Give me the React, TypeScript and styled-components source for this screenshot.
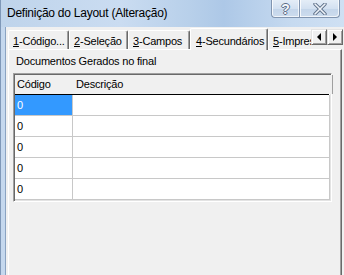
import styled, { createGlobalStyle } from 'styled-components'

const GlobalStyle = createGlobalStyle`
  html, body {
    margin: 0;
    padding: 0;
    background: #f0f0f0;
  }
  body {
    font-family: 'Liberation Sans', Arial, sans-serif;
  }
`

interface Tab {
    key: string
    label: string
    width: number
    active?: boolean
}

const tabs: Tab[] = [
    { key: '1', label: '-Código...', width: 61 },
    { key: '2', label: '-Seleção', width: 59 },
    { key: '3', label: '-Campos', width: 62 },
    { key: '4', label: '-Secundários', width: 78, active: true },
    { key: '5', label: '-Impressão', width: 60 },
]

const rows = ['0', '0', '0', '0', '0']

const App = () => {
    return (
        <>
            <GlobalStyle />
            <Window>
                <TitleBar>
                    <Title>Definição do Layout (Alteração)</Title>
                    <CaptionButtons>
                        <HelpButton>?</HelpButton>
                        <CloseButton>
                            <svg width="14" height="12" viewBox="0 0 14 12">
                                <path d="M2 1 L12 11 M12 1 L2 11" stroke="#5d6f88" strokeWidth="3.4" strokeLinecap="round" />
                                <path d="M2 1 L12 11 M12 1 L2 11" stroke="#eef3f9" strokeWidth="1.6" strokeLinecap="round" />
                            </svg>
                        </CloseButton>
                    </CaptionButtons>
                </TitleBar>
                <Body>
                    <Frame />
                    <Client>
                        <TabStrip>
                            <TabList>
                                {tabs.map((t) => (
                                    <TabItem key={t.key} $width={t.width} $active={!!t.active}>
                                        <Accel>{t.key}</Accel>
                                        {t.label}
                                    </TabItem>
                                ))}
                            </TabList>
                            <ScrollButton>
                                <Arrow $dir="left" />
                            </ScrollButton>
                            <ScrollButton>
                                <Arrow $dir="right" />
                            </ScrollButton>
                        </TabStrip>
                        <Panel>
                            <Caption>Documentos Gerados no final</Caption>
                            <Grid>
                                <HeaderRow>
                                    <HeaderCell $width={57}>Código</HeaderCell>
                                    <HeaderCell $width={256} $pad={3}>
                                        Descrição
                                    </HeaderCell>
                                </HeaderRow>
                                {rows.map((value, i) => (
                                    <Row key={i}>
                                        <Cell $width={57} $selected={i === 0}>
                                            {value}
                                        </Cell>
                                        <Cell $width={256} />
                                    </Row>
                                ))}
                            </Grid>
                        </Panel>
                    </Client>
                </Body>
            </Window>
        </>
    )
}

export default App

const Window = styled.div`
    height: 275px;
    width: 344px;
    overflow: hidden;
    display: flex;
    flex-direction: column;
    background: #c2d5eb;
`

const TitleBar = styled.div`
    height: 27px;
    flex-shrink: 0;
    display: flex;
    align-items: flex-start;
    justify-content: space-between;
    background: linear-gradient(90deg, #bfd4eb 0%, #cadcf1 35%, #b8d0ea 55%, #adc8e7 65%, #c6daf0 85%, #cfe0f3 100%);
    box-shadow: inset 1px 0 #7f98b8;
`

const Title = styled.div`
    padding: 6px 0 0 7px;
    font-size: 12px;
    letter-spacing: -0.25px;
    line-height: 15px;
    color: #000;
    white-space: nowrap;
`

const CaptionButtons = styled.div`
    display: flex;
    margin-right: 4px;
`

const CaptionButton = styled.div`
    height: 18px;
    box-sizing: border-box;
    display: flex;
    align-items: center;
    justify-content: center;
    border: 1px solid #8195b0;
    border-top: none;
    background: linear-gradient(180deg, #e4edf7 0%, #d3e1f1 50%, #c3d5ea 51%, #cddcee 100%);
    box-shadow: inset 1px 0 rgba(255, 255, 255, 0.8), inset -1px -1px rgba(255, 255, 255, 0.7);
`

const HelpButton = styled(CaptionButton)`
    width: 28px;
    border-radius: 0 0 0 4px;
    border-right: none;
    font-size: 14px;
    font-weight: bold;
    color: #f4f7fb;
    text-shadow: -1px 0 #5d6f88, 1px 0 #5d6f88, 0 -1px #5d6f88, 0 1px #5d6f88;
`

const CloseButton = styled(CaptionButton)`
    width: 41px;
    border-radius: 0 0 4px 0;
`

const Body = styled.div`
    flex: 1;
    display: flex;
    min-height: 0;
`

const Frame = styled.div`
    width: 6px;
    flex-shrink: 0;
    background: #c5d8ee;
    box-shadow: inset 1px 0 #7f98b8, inset -1px 0 #8aa3c2;
`

const Client = styled.div`
    flex: 1;
    background: #f0f0f0;
    padding: 1px 0 0 2px;
    display: flex;
    flex-direction: column;
    min-width: 0;
`

const TabStrip = styled.div`
    display: flex;
    align-items: flex-start;
    height: 21px;
    position: relative;
    z-index: 1;
`

const TabList = styled.div`
    display: flex;
    align-items: flex-start;
    width: 303px;
    overflow: hidden;
    height: 22px;
    flex-shrink: 0;
`

const TabItem = styled.div<{ $width: number; $active: boolean }>`
    flex-shrink: 0;
    box-sizing: border-box;
    width: ${(p) => p.$width}px;
    height: ${(p) => (p.$active ? 22 : 19)}px;
    margin-top: ${(p) => (p.$active ? 0 : 2)}px;
    padding: ${(p) => (p.$active ? 6 : 4)}px 0 0 ${(p) => (p.$active ? 5 : 4)}px;
    font-size: 11px;
    letter-spacing: -0.2px;
    line-height: 13px;
    color: #000;
    white-space: nowrap;
    overflow: hidden;
    background: #f0f0f0;
    border-top: 1px solid #fff;
    border-left: 1px solid #fff;
    border-right: 1px solid #696969;
    border-radius: 2px 2px 0 0;
    box-shadow: inset -1px 0 #a0a0a0;
`

const Accel = styled.span`
    text-decoration: underline;
`

const ScrollButton = styled.div`
    width: 16px;
    height: 16px;
    margin-top: 1px;
    box-sizing: border-box;
    flex-shrink: 0;
    display: flex;
    align-items: center;
    justify-content: center;
    background: #f0f0f0;
    border-top: 1px solid #e3e3e3;
    border-left: 1px solid #e3e3e3;
    border-right: 1px solid #696969;
    border-bottom: 1px solid #696969;
    box-shadow: inset 1px 1px #fff, inset -1px -1px #a0a0a0;
`

const Arrow = styled.span<{ $dir: 'left' | 'right' }>`
    width: 0;
    height: 0;
    border-top: 4px solid transparent;
    border-bottom: 4px solid transparent;
    ${(p) => (p.$dir === 'left' ? 'border-right: 4px solid #000;' : 'border-left: 4px solid #000;')}
`

const Panel = styled.div`
    flex: 1;
    width: 334px;
    box-sizing: border-box;
    border-top: 1px solid #fff;
    border-left: 1px solid #fff;
    border-right: 1px solid #696969;
    box-shadow: inset -1px 0 #a0a0a0;
    padding: 5px 0 0 4px;
`

const Caption = styled.div`
    font-size: 11px;
    letter-spacing: -0.2px;
    line-height: 13px;
    color: #000;
    padding-left: 3px;
    margin-bottom: 5px;
`

const Grid = styled.div`
    width: 319px;
    box-sizing: border-box;
    background: #fff;
    border: 1px solid;
    border-color: #a0a0a0 #fff #fff #a0a0a0;
    box-shadow: inset 1px 1px #696969, inset -1px -1px #e3e3e3;
    padding: 1px;
    height: 129px;
`

const HeaderRow = styled.div`
    display: flex;
    height: 20px;
    box-sizing: border-box;
    border-bottom: 1px solid #000;
    width: 314px;
`

const HeaderCell = styled.div<{ $width: number; $pad?: number }>`
    width: ${(p) => p.$width}px;
    flex-shrink: 0;
    box-sizing: content-box;
    border-right: 1px solid #a0a0a0;
    background: #f0f0f0;
    font-size: 11px;
    letter-spacing: -0.2px;
    line-height: 19px;
    padding-left: ${(p) => p.$pad ?? 2}px;
    margin-right: -${(p) => p.$pad ?? 2}px;
    color: #000;
    white-space: nowrap;
`

const Row = styled.div`
    display: flex;
    height: 21px;
    box-sizing: border-box;
    border-bottom: 1px solid #c8c8c8;
`

const Cell = styled.div<{ $width: number; $selected?: boolean }>`
    width: ${(p) => p.$width - 2}px;
    flex-shrink: 0;
    padding-left: 2px;
    border-right: 1px solid #c8c8c8;
    background: ${(p) => (p.$selected ? '#3399ff' : '#fff')};
    color: ${(p) => (p.$selected ? '#fff' : '#000')};
    font-size: 11px;
    line-height: 20px;
`
